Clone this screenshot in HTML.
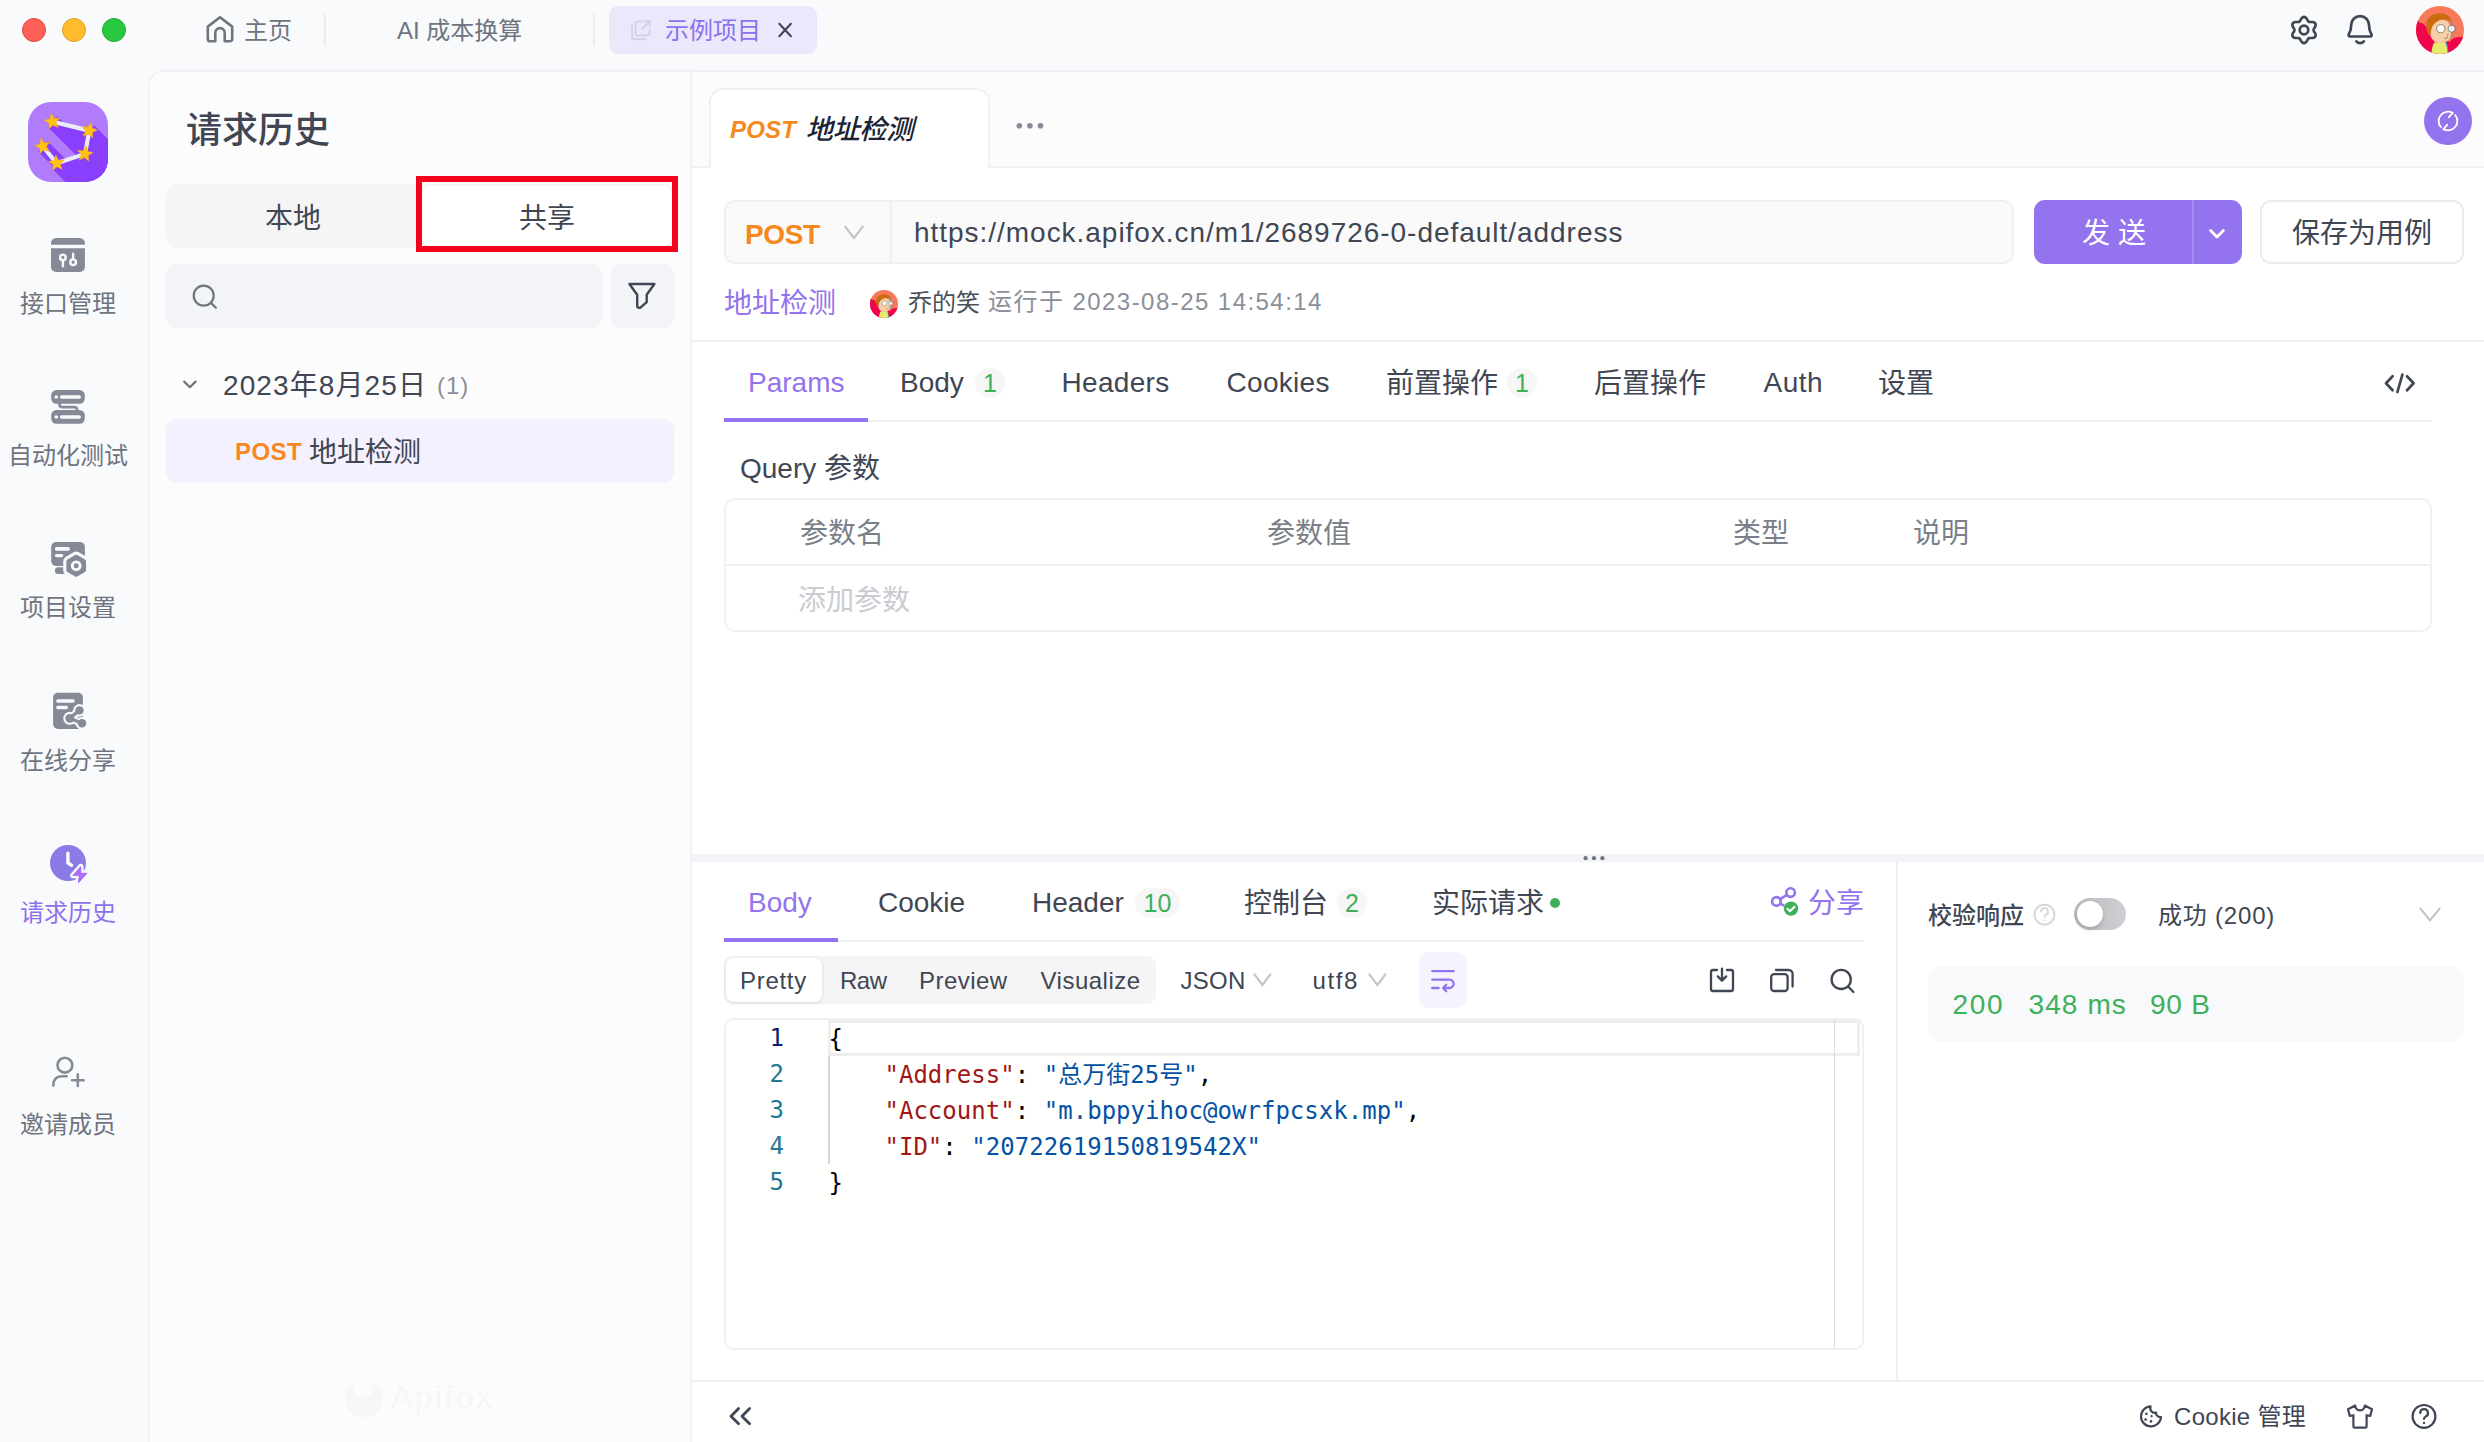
<!DOCTYPE html>
<html lang="zh-CN">
<head>
<meta charset="utf-8">
<title>Apifox - 请求历史</title>
<style>
*{box-sizing:border-box;margin:0;padding:0}
html,body{width:2484px;height:1442px;overflow:hidden;background:#f9fafb}
body{position:relative;font-family:"Liberation Sans","Noto Sans CJK SC",sans-serif;color:#404653;-webkit-font-smoothing:antialiased}
.a{position:absolute}
.t{position:absolute;white-space:nowrap;line-height:1;transform:translateY(-50%)}
.c{position:absolute;white-space:nowrap;line-height:1;transform:translate(-50%,-50%)}
svg{position:absolute;overflow:visible}
.mono{font-family:"DejaVu Sans Mono","Liberation Mono","Noto Sans CJK SC",monospace}
/* ---------- chrome ---------- */
#titlebar{left:0;top:0;width:2484px;height:70px;background:#f9fafb}
#sidebar{left:0;top:70px;width:150px;height:1372px;background:#f9fafb}
#panel{left:148px;top:70px;width:544px;height:1380px;background:#fcfcfd;border:2px solid #f0f2f6;border-radius:15px 0 0 0}
#main{left:692px;top:70px;width:1792px;height:1372px;background:#fff}
#tabstrip{left:692px;top:70px;width:1792px;height:98px;background:#fcfcfd;border-top:2px solid #f0f1f5;border-bottom:2px solid #f0f1f5}
#acttab{left:709px;top:88px;width:281px;height:80px;background:#fff;border:2px solid #f0f1f5;border-bottom:none;border-radius:14px 14px 0 0}

.tab{font-size:28px;color:#404653}
.tabact{font-size:28px;color:#9373ee}
.badge{position:absolute;height:30px;border-radius:15px;background:#f6f6f7;color:#3eb05a;font-size:25px;line-height:30px;text-align:center}
.th{font-size:28px;color:#7a7f8a}
.hl{position:absolute;background:#eef0f4}
.seg{font-size:24px;color:#404653;letter-spacing:.7px}
.ln{position:absolute;left:724px;width:60px;text-align:right;font-size:24px;line-height:36px;color:#237893}
.cl{position:absolute;left:826.5px;letter-spacing:.03px;margin-top:.5px;font-size:24px;line-height:36px;white-space:pre;color:#000}
.k{color:#a31515}.v{color:#0451a5}

.nav{color:#6e7480;font-size:24px}
.navact{color:#8d71ee;font-size:24px}
</style>
</head>
<body>
<!-- ======== window chrome ======== -->
<div class="a" id="titlebar"></div>
<div class="a" id="sidebar"></div>
<div class="a" id="panel"></div>
<div class="a" id="main"></div>
<div class="a" id="tabstrip"></div>
<div class="a" id="acttab"></div>

<!-- TITLEBAR -->
<div class="a" style="left:22px;top:18px;width:24px;height:24px;border-radius:50%;background:#fe5f57;border:1px solid #e2463f"></div>
<div class="a" style="left:62px;top:18px;width:24px;height:24px;border-radius:50%;background:#febc2e;border:1px solid #e0a123"></div>
<div class="a" style="left:102px;top:18px;width:24px;height:24px;border-radius:50%;background:#28c840;border:1px solid #1fab2f"></div>
<svg style="left:200px;top:10px" width="40" height="40" viewBox="200 10 40 40" fill="none" stroke="#6e7480" stroke-width="2.6" stroke-linejoin="round" stroke-linecap="round"><path d="M215.3 41.3H210.2a2.4 2.4 0 0 1-2.4-2.4V26.6L220 17.2l12.2 9.4v12.3a2.4 2.4 0 0 1-2.4 2.4h-5.1V32.8a4.7 4.7 0 0 0-9.4 0z"/></svg>
<div class="t nav" id="t_home" style="left:244px;top:31px">主页</div>
<div class="a" style="left:324px;top:14px;width:2px;height:32px;background:#e9ebef"></div>
<div class="t nav" id="t_ai" style="left:397px;top:31px">AI 成本换算</div>
<div class="a" style="left:593px;top:14px;width:2px;height:32px;background:#e9ebef"></div>
<div class="a" style="left:609px;top:6px;width:208px;height:48px;border-radius:9px;background:#ebe8fb"></div>
<svg style="left:628px;top:17px" width="26" height="26" viewBox="628 17 26 26" fill="none" stroke="#d4d1e2" stroke-width="2" stroke-linecap="round" stroke-linejoin="round"><path d="M641 21.5h-3.6a1.8 1.8 0 0 0-1.8 1.8v10.4a1.8 1.8 0 0 0 1.8 1.8h10.4a1.8 1.8 0 0 0 1.8-1.8V30"/><path d="M644.5 21.2h5.3v5.3M649.5 21.5l-7 7"/><path d="M632 25.5v11.8a2 2 0 0 0 2 2h11.8"/></svg>
<div class="t navact" id="t_proj" style="left:665px;top:31px">示例项目</div>
<svg style="left:775px;top:20px" width="20" height="20" viewBox="775 20 20 20" fill="none" stroke="#404653" stroke-width="2.1" stroke-linecap="round"><path d="M779.3 23.8l11.6 12.4M790.9 23.8l-11.6 12.4"/></svg>
<!-- gear -->
<svg style="left:2286px;top:12px" width="36" height="36" viewBox="-18 -18 36 36" fill="none" stroke="#404653" stroke-width="2.7" stroke-linejoin="round"><path d="M9.55 0.00 L9.62 0.50 L9.83 1.03 L10.14 1.61 L10.52 2.24 L10.91 2.92 L11.26 3.66 L11.51 4.42 L11.62 5.17 L11.55 5.89 L11.30 6.52 L10.87 7.06 L10.29 7.47 L9.58 7.76 L8.80 7.92 L7.99 7.99 L7.20 8.00 L6.46 7.98 L5.81 8.00 L5.25 8.08 L4.78 8.27 L4.37 8.59 L4.02 9.03 L3.68 9.59 L3.32 10.23 L2.92 10.91 L2.46 11.58 L1.93 12.18 L1.33 12.65 L0.68 12.95 L0.00 13.05 L-0.68 12.95 L-1.33 12.65 L-1.93 12.18 L-2.46 11.58 L-2.92 10.91 L-3.32 10.23 L-3.68 9.59 L-4.02 9.03 L-4.37 8.59 L-4.77 8.27 L-5.25 8.08 L-5.81 8.00 L-6.46 7.98 L-7.20 8.00 L-7.99 7.99 L-8.80 7.92 L-9.58 7.76 L-10.29 7.47 L-10.87 7.06 L-11.30 6.52 L-11.55 5.89 L-11.62 5.17 L-11.51 4.42 L-11.26 3.66 L-10.91 2.92 L-10.52 2.24 L-10.14 1.61 L-9.83 1.03 L-9.62 0.50 L-9.55 0.00 L-9.62 -0.50 L-9.83 -1.03 L-10.14 -1.61 L-10.52 -2.24 L-10.91 -2.92 L-11.26 -3.66 L-11.51 -4.42 L-11.62 -5.17 L-11.55 -5.89 L-11.30 -6.52 L-10.87 -7.06 L-10.29 -7.47 L-9.58 -7.76 L-8.80 -7.92 L-7.99 -7.99 L-7.20 -8.00 L-6.46 -7.98 L-5.81 -8.00 L-5.25 -8.08 L-4.78 -8.27 L-4.37 -8.59 L-4.02 -9.03 L-3.68 -9.59 L-3.32 -10.23 L-2.92 -10.91 L-2.46 -11.58 L-1.93 -12.18 L-1.33 -12.65 L-0.68 -12.95 L-0.00 -13.05 L0.68 -12.95 L1.33 -12.65 L1.93 -12.18 L2.46 -11.58 L2.92 -10.91 L3.32 -10.23 L3.68 -9.59 L4.02 -9.03 L4.37 -8.59 L4.78 -8.27 L5.25 -8.08 L5.81 -8.00 L6.46 -7.98 L7.20 -8.00 L7.99 -7.99 L8.80 -7.92 L9.58 -7.76 L10.29 -7.47 L10.87 -7.06 L11.30 -6.52 L11.55 -5.89 L11.62 -5.17 L11.51 -4.42 L11.26 -3.66 L10.91 -2.92 L10.52 -2.24 L10.14 -1.61 L9.83 -1.03 L9.62 -0.50Z"/><circle cx="0" cy="0" r="4.3"/></svg>
<!-- bell -->
<svg style="left:2342px;top:12px" width="36" height="36" viewBox="2342 12 36 36" fill="none" stroke="#404653" stroke-width="2.7" stroke-linecap="round" stroke-linejoin="round"><path d="M2350 36.5h20.2c1.3 0 1.8-1.2 1.2-2.2-1.5-2.5-2.4-4.3-2.4-9.3a8.9 8.9 0 0 0-17.8 0c0 5-.9 6.8-2.4 9.3-.6 1 .1 2.2 1.2 2.2z"/><path d="M2356.4 41.4c1.1 1.3 2.3 1.8 3.7 1.8s2.6-.5 3.7-1.8"/></svg>
<!-- avatar -->
<svg style="left:2416px;top:6px" width="48" height="48" viewBox="0 0 48 48"><defs><clipPath id="av1"><circle cx="24" cy="24" r="24"/></clipPath></defs><g clip-path="url(#av1)"><rect width="48" height="48" fill="#f8795a"/><path d="M-1 15c2.5-1 4 .5 5 2 2.5-.5 4.5 1 5.5 3.5L20 30l14 6c1.5-3 4-4.5 7-4.8 2.5-.5 5 .2 7.5-1.2V49H-1z" fill="#f0044c"/><path d="M15.4 49c.2-6 1.2-10 2.8-12.6h11.2c1.6 3 2.4 7 2.4 12.6z" fill="#e6ed6e"/><path d="M30 36.4c1.2 3 1.9 7 2 12.6" stroke="#21b5e0" stroke-width="1" fill="none"/><rect x="14" y="13.6" width="21.5" height="23.8" rx="10.2" ry="11.2" fill="#f7d0a8"/><path d="M35.2 14.5c.8 5 .9 12 .1 17.5" stroke="#21b5e0" stroke-width="1.2" fill="none"/><path d="M13 29.6c-2.4-4-3.2-9-2.4-13.2C12 10.6 17 7.4 23.6 7.3c6.5-.1 11 3.2 12 8.2-4.5-2.4-9.5-2.6-13.6-.6-4.2 2.2-6.8 6.2-7 11.2-.1 1.2-.6 2.4-2 3.5z" fill="#c96d0f"/><circle cx="24.8" cy="22.7" r="4.1" fill="#fbfcfd" stroke="#4a3a2c" stroke-width=".55"/><circle cx="35.6" cy="22.7" r="3.5" fill="#e6f2fa" stroke="#4a3a2c" stroke-width=".5"/><path d="M28.2 31.6c.4 1.4 1.8 1.6 2.6.6.5-.7.8-1.5.9-2.4" stroke="#5b4330" stroke-width=".55" fill="none"/><path d="M30.8 28.2c.6.3 1.2.3 1.8 0" stroke="#5b4330" stroke-width=".5" fill="none"/></g></svg>
<!-- SIDEBAR -->
<svg style="left:28px;top:102px" width="80" height="80" viewBox="28 102 80 80"><defs><clipPath id="lg1"><rect x="28" y="102" width="80" height="80" rx="23"/></clipPath></defs><g clip-path="url(#lg1)"><rect x="28" y="102" width="80" height="80" fill="#b17cfb"/><g fill="#8a3ffc"><polygon points="52.4,121.6 89.3,130.6 179.3,220.6 142.4,211.6"/><polygon points="89.3,130.6 85.0,154.0 175.0,244.0 179.3,220.6"/><polygon points="85.0,154.0 56.6,163.2 146.6,253.2 175.0,244.0"/><polygon points="56.6,163.2 42.8,146.2 132.8,236.2 146.6,253.2"/><polygon points="47.4,126.6 57.4,116.6 147.4,206.6 137.4,216.6"/><polygon points="84.3,135.6 94.3,125.6 184.3,215.6 174.3,225.6"/><polygon points="80.0,159.0 90.0,149.0 180.0,239.0 170.0,249.0"/><polygon points="51.6,168.2 61.6,158.2 151.6,248.2 141.6,258.2"/><polygon points="37.8,151.2 47.8,141.2 137.8,231.2 127.8,241.2"/></g><g stroke="#e9ebf7" stroke-width="4.2" stroke-linecap="round" fill="none"><path d="M52.4 121.6L89.3 130.6L85 154L56.6 163.2L42.8 146.2"/></g><g fill="#ffc20e" stroke="#f7a51c" stroke-width=".6"><polygon points="51.3,113.5 54.1,118.4 59.8,118.0 55.9,122.2 58.1,127.5 52.9,125.2 48.6,128.8 49.2,123.2 44.3,120.2 49.9,119.0"/><polygon points="91.0,122.6 92.0,128.2 97.5,129.7 92.4,132.4 92.6,138.1 88.6,134.1 83.2,136.1 85.7,131.0 82.2,126.5 87.8,127.3"/><polygon points="40.8,138.2 44.1,142.9 49.8,141.9 46.4,146.5 49.1,151.5 43.7,149.7 39.7,153.8 39.7,148.1 34.6,145.6 40.0,143.9"/><polygon points="86.1,145.9 87.5,151.4 93.1,152.6 88.2,155.6 88.8,161.2 84.5,157.6 79.3,159.9 81.5,154.6 77.6,150.4 83.3,150.8"/><polygon points="55.7,155.0 58.4,160.1 64.1,159.9 60.1,163.9 62.1,169.3 57.0,166.8 52.5,170.3 53.3,164.7 48.6,161.5 54.2,160.5"/></g></g></svg>
<svg style="left:51px;top:238px" width="34" height="34" viewBox="0 0 34 34"><path d="M5.2 .1h23.5a5.2 5.2 0 0 1 5.2 5.2v1.4H0V5.3A5.2 5.2 0 0 1 5.2 .1z" fill="#858a96"/><path d="M0 10.3h33.9V29a5 5 0 0 1-5 5H5a5 5 0 0 1-5-5z" fill="#858a96"/><g fill="none" stroke="#f9fafb" stroke-width="2.4" stroke-linecap="round"><circle cx="11.9" cy="19.4" r="2.8"/><path d="M11.9 22.6v5.6"/><circle cx="22.1" cy="24.2" r="2.8"/><path d="M22.1 21v-5.2"/></g></svg>
<div class="c nav" id="s1" style="left:68px;top:304px">接口管理</div>
<svg style="left:51px;top:390px" width="34" height="34" viewBox="0 0 34 34"><rect x="0.2" y="0" width="33.6" height="13.8" rx="5.2" fill="#858a96"/><rect x="0.2" y="20" width="33.6" height="13.8" rx="5.2" fill="#858a96"/><path d="M8.6 13v1.6a2.6 2.6 0 0 0 2.6 2.6h12.2a2.6 2.6 0 0 1 2.6 2.6V21" fill="none" stroke="#858a96" stroke-width="2.7"/><g stroke="#f8f9fb" stroke-width="3.5" stroke-linecap="round"><path d="M10.6 6.9h17.6M10.6 26.9h17.6"/><path d="M5.2 6.9h.1M5.2 26.9h.1"/></g></svg>
<div class="c nav" id="s2" style="left:68px;top:456px">自动化测试</div>
<svg style="left:51px;top:542px" width="38" height="36" viewBox="0 0 38 36"><rect x=".2" y=".1" width="33.7" height="23.8" rx="4.8" fill="#858a96"/><rect x="4" y="25.2" width="12" height="6.7" rx="3" fill="#858a96"/><g stroke="#f8f9fb" stroke-linecap="round"><path d="M5.6 6.9h11.6" stroke-width="3.6"/><path d="M5.6 13.6h5" stroke-width="3.4"/></g><polygon points="25.20,14.90 32.91,19.35 32.91,28.25 25.20,32.70 17.49,28.25 17.49,19.35" fill="#f8f9fb" stroke="#f8f9fb" stroke-width="10.6" stroke-linejoin="round"/><polygon points="25.20,14.90 32.91,19.35 32.91,28.25 25.20,32.70 17.49,28.25 17.49,19.35" fill="#858a96" stroke="#858a96" stroke-width="4.2" stroke-linejoin="round"/><circle cx="25.2" cy="23.8" r="3.95" fill="none" stroke="#f8f9fb" stroke-width="2.9"/></svg>
<div class="c nav" id="s3" style="left:68px;top:608px">项目设置</div>
<svg style="left:53px;top:692px" width="36" height="38" viewBox="0 0 36 38"><rect x=".1" y=".7" width="29.8" height="36.2" rx="4.8" fill="#858a96"/><g stroke="#f8f9fb" stroke-width="3.5" stroke-linecap="round"><path d="M4.9 8.9h15.2M4.9 15.6h8.4"/></g><g stroke="#f8f9fb" stroke-width="7.6" stroke-linecap="round" stroke-linejoin="round" fill="none"><path d="M26.5 18.4L16.75 26.3L29 31.3"/></g><g fill="#f8f9fb"><circle cx="26.5" cy="18.4" r="6.3"/><circle cx="16.75" cy="26.3" r="6.5"/><circle cx="29" cy="31.3" r="6.3"/></g><g stroke="#858a96" stroke-width="3.3" fill="none" stroke-linejoin="round"><path d="M26.5 18.4L16.75 26.3L29 31.3"/></g><g fill="#858a96"><circle cx="26.5" cy="18.4" r="4.2"/><circle cx="16.75" cy="26.3" r="4.4"/><circle cx="29" cy="31.3" r="4.2"/></g></svg>
<div class="c nav" id="s4" style="left:68px;top:761px">在线分享</div>
<svg style="left:50px;top:845px" width="40" height="40" viewBox="0 0 40 40"><circle cx="18" cy="18" r="18" fill="#8b7be6"/><path d="M17.9 8.2v9.8l3.6 2.2" stroke="#fff" stroke-width="3.4" fill="none" stroke-linecap="round" stroke-linejoin="round"/><path d="M30.75 21.6L22.85 30.5H29.3L28.25 38L37 28.3H30.95z" fill="#ad6efc" stroke="#f8f9fb" stroke-width="5.6" stroke-linejoin="round" paint-order="stroke"/><path d="M30.75 21.6L22.85 30.5H29.3L28.25 38L37 28.3H30.95z" fill="#ad6efc" stroke="#ad6efc" stroke-width=".8" stroke-linejoin="round"/></svg>
<div class="c navact" id="s5" style="left:68px;top:913px">请求历史</div>
<svg style="left:50px;top:1054px" width="36" height="36" viewBox="50 1055 36 36" fill="none" stroke="#858a96" stroke-width="2.6" stroke-linecap="round"><circle cx="64.9" cy="1066.2" r="7.4"/><path d="M53.3 1086.4c0-6 3-9.2 8.6-9.2h4.8"/><path d="M72 1081.2h11.6M77.8 1075.4v11.6"/></svg>
<div class="c nav" id="s6" style="left:68px;top:1125px">邀请成员</div>
<!-- PANEL -->
<div class="t" id="p_title" style="left:186px;top:130.5px;font-size:36px;font-weight:500;color:#404653">请求历史</div>
<div class="a" style="left:166px;top:184px;width:508px;height:64px;border-radius:10px;background:#f5f5f5"></div>
<div class="a" style="left:422px;top:186px;width:250px;height:60px;border-radius:8px;background:#fff;box-shadow:0 1px 3px rgba(0,0,0,.08)"></div>
<div class="c" id="p_local" style="left:293px;top:218.5px;font-size:28px;color:#404653">本地</div>
<div class="c" id="p_share" style="left:547px;top:218.5px;font-size:28px;color:#404653">共享</div>
<div class="a" style="left:416px;top:176px;width:262px;height:76px;border:6px solid #f5001d"></div>
<div class="a" style="left:166px;top:264px;width:436px;height:64px;border-radius:11px;background:#f3f4f8"></div>
<svg style="left:188px;top:280px" width="32" height="32" viewBox="188 280 32 32" fill="none" stroke="#6e7480" stroke-width="2.2" stroke-linecap="round"><circle cx="203.7" cy="295.6" r="10"/><path d="M211.2 303.1l4.7 4.7"/></svg>
<div class="a" style="left:610px;top:264px;width:64px;height:64px;border-radius:11px;background:#f3f4f8"></div>
<svg style="left:624px;top:278px" width="36" height="36" viewBox="624 278 36 36" fill="none" stroke="#404653" stroke-width="2.4" stroke-linejoin="round"><path d="M629.4 284h25l-7.7 10.8v7.4l-6 5.2c-1.5.9-3.5.3-3.5-1.2v-11.4z" transform="translate(0 0)"/></svg>
<svg style="left:180px;top:374px" width="20" height="20" viewBox="180 374 20 20" fill="none" stroke="#6e7480" stroke-width="2.2" stroke-linecap="round" stroke-linejoin="round"><path d="M184.2 381.6l5.7 5.7 5.7-5.7"/></svg>
<div class="t" id="p_date" style="left:223px;top:385.7px;font-size:28px;color:#404653;letter-spacing:1.1px">2023年8月25日</div>
<div class="t" id="p_cnt" style="left:437px;top:386px;font-size:24px;color:#8a8f99;letter-spacing:1px">(1)</div>
<div class="a" style="left:166px;top:419px;width:508px;height:64px;border-radius:11px;background:#f3f1fd"></div>
<div class="t" id="p_post" style="left:235px;top:452px;font-size:24px;font-weight:700;color:#f6881d;letter-spacing:.4px">POST</div>
<div class="t" id="p_name" style="left:309px;top:453px;font-size:28px;color:#404653">地址检测</div>
<!-- watermark -->
<svg style="left:344px;top:1379px" width="40" height="40" viewBox="344 1379 40 40"><defs><mask id="wm1"><rect x="340" y="1375" width="50" height="50" fill="#fff"/><circle cx="363" cy="1387.6" r="10.2" fill="#000"/></mask></defs><circle cx="364" cy="1398.4" r="19" fill="#f6f7f8" mask="url(#wm1)"/></svg>
<div class="t" id="p_wm" style="left:391px;top:1397px;font-size:32px;color:#f5f6f7;letter-spacing:2.4px">Apifox</div>
<!-- REQUEST -->
<div class="t" id="r_tpost" style="left:730px;top:130px;font-size:24px;font-weight:700;font-style:italic;color:#f6881d;letter-spacing:.2px">POST</div>
<div class="t" id="r_tname" style="left:805.5px;top:130px;font-size:27.4px;font-style:italic;color:#1a2233;font-weight:500;letter-spacing:-.5px">地址检测</div>
<svg style="left:1012px;top:118px" width="36" height="16" viewBox="1012 118 36 16" fill="#858a96"><circle cx="1019.3" cy="125.8" r="2.8"/><circle cx="1029.9" cy="125.8" r="2.8"/><circle cx="1040.5" cy="125.8" r="2.8"/></svg>
<div class="a" style="left:2424px;top:97px;width:48px;height:48px;border-radius:50%;background:#9373ee"></div>
<svg style="left:2434px;top:107px" width="28" height="28" viewBox="-15.6 -15.6 31.2 31.2" fill="none" stroke="#fff" stroke-width="2.1" stroke-linecap="round" stroke-linejoin="round"><path d="M-7.97 6.68A10.4 10.4 0 0 1 5.20 -9.01L0.9 -4.3"/><path d="M7.97 -6.68A10.4 10.4 0 0 1 -5.20 9.01L-0.9 4.3"/></svg>
<!-- url bar -->
<div class="a" style="left:724px;top:200px;width:1290px;height:64px;border-radius:11px;background:#fafafa;border:2px solid #eff0f4"></div>
<div class="a" style="left:890px;top:202px;width:2px;height:60px;background:#eff0f4"></div>
<div class="t" id="r_post" style="left:745px;top:235px;font-size:28px;font-weight:700;color:#f6881d;letter-spacing:-.4px">POST</div>
<svg style="left:842px;top:222px" width="24" height="20" viewBox="842 222 24 20" fill="none" stroke="#c3c5cb" stroke-width="2.2" stroke-linecap="round" stroke-linejoin="round"><path d="M845.2 226.6l8.8 11.4 8.8-11.4"/></svg>
<div class="t" id="r_url" style="left:914px;top:233px;font-size:28px;color:#404653;letter-spacing:.97px">https://mock.apifox.cn/m1/2689726-0-default/address</div>
<div class="a" style="left:2034px;top:200px;width:208px;height:64px;border-radius:11px;background:#9373ee"></div>
<div class="a" style="left:2192px;top:200px;width:2px;height:64px;background:#a78df1"></div>
<div class="c" id="r_send" style="left:2114px;top:234px;font-size:28px;color:#fff">发 送</div>
<svg style="left:2205px;top:224px" width="24" height="20" viewBox="2205 224 24 20" fill="none" stroke="#fff" stroke-width="2.8" stroke-linecap="round" stroke-linejoin="round"><path d="M2210.6 230.6l6.4 6.4 6.4-6.4"/></svg>
<div class="a" style="left:2260px;top:200px;width:204px;height:64px;border-radius:11px;background:#fff;border:2px solid #e9ebf0"></div>
<div class="c" id="r_save" style="left:2362px;top:234px;font-size:28px;color:#404653">保存为用例</div>
<!-- meta row -->
<div class="t" id="r_name" style="left:724px;top:304.3px;font-size:28px;color:#9373ee">地址检测</div>
<svg style="left:870px;top:290px" width="28" height="28" viewBox="0 0 48 48"><defs><clipPath id="av2"><circle cx="24" cy="24" r="24"/></clipPath></defs><g clip-path="url(#av2)"><rect width="48" height="48" fill="#f8795a"/><path d="M-1 15c2.5-1 4 .5 5 2 2.5-.5 4.5 1 5.5 3.5L20 30l14 6c1.5-3 4-4.5 7-4.8 2.5-.5 5 .2 7.5-1.2V49H-1z" fill="#f0044c"/><path d="M15.4 49c.2-6 1.2-10 2.8-12.6h11.2c1.6 3 2.4 7 2.4 12.6z" fill="#e6ed6e"/><path d="M30 36.4c1.2 3 1.9 7 2 12.6" stroke="#21b5e0" stroke-width="1" fill="none"/><rect x="14" y="13.6" width="21.5" height="23.8" rx="10.2" ry="11.2" fill="#f7d0a8"/><path d="M35.2 14.5c.8 5 .9 12 .1 17.5" stroke="#21b5e0" stroke-width="1.2" fill="none"/><path d="M13 29.6c-2.4-4-3.2-9-2.4-13.2C12 10.6 17 7.4 23.6 7.3c6.5-.1 11 3.2 12 8.2-4.5-2.4-9.5-2.6-13.6-.6-4.2 2.2-6.8 6.2-7 11.2-.1 1.2-.6 2.4-2 3.5z" fill="#c96d0f"/><circle cx="24.8" cy="22.7" r="4.1" fill="#fbfcfd" stroke="#4a3a2c" stroke-width=".55"/><circle cx="35.6" cy="22.7" r="3.5" fill="#e6f2fa" stroke="#4a3a2c" stroke-width=".5"/><path d="M28.2 31.6c.4 1.4 1.8 1.6 2.6.6.5-.7.8-1.5.9-2.4" stroke="#5b4330" stroke-width=".55" fill="none"/><path d="M30.8 28.2c.6.3 1.2.3 1.8 0" stroke="#5b4330" stroke-width=".5" fill="none"/></g></svg>
<div class="t" id="r_user" style="left:908px;top:303px;font-size:24px;color:#4a4f5a">乔的笑</div>
<div class="t" id="r_time" style="left:988px;top:302.2px;font-size:24px;color:#8a8f99;letter-spacing:1.45px">运行于 2023-08-25 14:54:14</div>
<div class="hl" style="left:692px;top:340px;width:1792px;height:2px"></div>
<!-- request tabs -->
<div class="t tabact" id="q_params" style="left:748px;top:383px">Params</div>
<div class="a" style="left:724px;top:418px;width:144px;height:4px;background:#9373ee;z-index:2"></div>
<div class="t tab" id="q_body" style="left:900px;top:383px">Body</div>
<div class="badge" style="left:975px;top:368px;width:30px">1</div>
<div class="t tab" id="q_headers" style="left:1061.5px;top:383px;letter-spacing:.3px">Headers</div>
<div class="t tab" id="q_cookies" style="left:1226.5px;top:383px;letter-spacing:.3px">Cookies</div>
<div class="t tab" id="q_pre" style="left:1386px;top:384px">前置操作</div>
<div class="badge" style="left:1507px;top:368px;width:30px">1</div>
<div class="t tab" id="q_post" style="left:1594px;top:384px">后置操作</div>
<div class="t tab" id="q_auth" style="left:1763.5px;top:383px;letter-spacing:.5px">Auth</div>
<div class="t tab" id="q_set" style="left:1878px;top:384px">设置</div>
<svg style="left:2382px;top:370px" width="36" height="26" viewBox="2382 370 36 26" fill="none" stroke="#404653" stroke-width="2.7" stroke-linecap="round" stroke-linejoin="round"><path d="M2392.6 376.3l-6.6 7 6.6 7M2407 376.3l6.6 7-6.6 7M2402.4 374.6l-5 17.4"/></svg>
<div class="hl" style="left:724px;top:420px;width:1708px;height:2px"></div>
<div class="t" id="q_query" style="left:740px;top:469px;font-size:28px;color:#404653">Query 参数</div>
<div class="a" style="left:724px;top:498px;width:1708px;height:134px;border:2px solid #f0f2f5;border-radius:11px;background:#fff"></div>
<div class="hl" style="left:726px;top:564px;width:1704px;height:2px"></div>
<div class="t th" id="q_c1" style="left:800px;top:534.2px">参数名</div>
<div class="t th" id="q_c2" style="left:1267px;top:534.2px">参数值</div>
<div class="t th" id="q_c3" style="left:1733px;top:534.2px">类型</div>
<div class="t th" id="q_c4" style="left:1913px;top:534.2px">说明</div>
<div class="t" id="q_add" style="left:798px;top:601.2px;font-size:28px;color:#c9cbd0">添加参数</div>
<!-- splitter -->
<div class="a" style="left:692px;top:854px;width:1792px;height:8px;background:#f3f4f8"></div>
<svg style="left:1580px;top:852px" width="28" height="12" viewBox="1580 852 28 12" fill="#6e7480"><circle cx="1585.6" cy="858.2" r="2.1"/><circle cx="1594" cy="858.2" r="2.1"/><circle cx="1602.4" cy="858.2" r="2.1"/></svg>
<!-- RESPONSE -->
<div class="t tabact" id="e_body" style="left:748px;top:903px">Body</div>
<div class="a" style="left:724px;top:938px;width:114px;height:4px;background:#9373ee;z-index:2"></div>
<div class="t tab" id="e_cookie" style="left:878px;top:903px">Cookie</div>
<div class="t tab" id="e_header" style="left:1032px;top:903px">Header</div>
<div class="badge" style="left:1135px;top:888px;width:45px">10</div>
<div class="t tab" id="e_console" style="left:1244px;top:904px">控制台</div>
<div class="badge" style="left:1337px;top:888px;width:30px">2</div>
<div class="t tab" id="e_actual" style="left:1432px;top:904px">实际请求</div>
<div class="a" style="left:1550px;top:898px;width:10px;height:10px;border-radius:50%;background:#3eb05a"></div>
<svg style="left:1768px;top:884px" width="34" height="36" viewBox="1768 884 34 36"><g fill="none" stroke="#9373ee" stroke-width="2.6"><circle cx="1790.6" cy="892.6" r="4.3"/><circle cx="1776.4" cy="901.4" r="4.3"/><path d="M1786.9 894.9l-6.8 4.2M1780.2 903.5l4 2.4"/></g><circle cx="1791" cy="908.6" r="7.2" fill="#3eb05a"/><path d="M1787.4 908.8l2.6 2.5 4.5-4.6" fill="none" stroke="#fff" stroke-width="2" stroke-linecap="round" stroke-linejoin="round"/></svg>
<div class="t" id="e_share" style="left:1808px;top:904px;font-size:28px;color:#9373ee">分享</div>
<div class="hl" style="left:724px;top:940px;width:1140px;height:2px"></div>
<!-- toolbar -->
<div class="a" style="left:724px;top:956px;width:432px;height:48px;border-radius:9px;background:#f5f5f5"></div>
<div class="a" style="left:726px;top:958px;width:96px;height:44px;border-radius:7px;background:#fff;box-shadow:0 1px 4px rgba(0,0,0,.12)"></div>
<div class="t seg" id="e_pretty" style="left:740px;top:981px">Pretty</div>
<div class="t seg" id="e_raw" style="left:840px;top:981px;letter-spacing:-.5px">Raw</div>
<div class="t seg" id="e_preview" style="left:919px;top:981px;letter-spacing:.45px">Preview</div>
<div class="t seg" id="e_visual" style="left:1040.5px;top:981px;letter-spacing:.5px">Visualize</div>
<div class="t seg" id="e_json" style="left:1180.5px;top:981px;letter-spacing:.3px">JSON</div>
<svg style="left:1250px;top:970px" width="24" height="20" viewBox="1250 970 24 20" fill="none" stroke="#c3c5cb" stroke-width="2.2" stroke-linecap="round" stroke-linejoin="round"><path d="M1254.4 974.4l8 10.6 8-10.6"/></svg>
<div class="t seg" id="e_utf8" style="left:1312.5px;top:981px;letter-spacing:1.6px">utf8</div>
<svg style="left:1365px;top:970px" width="24" height="20" viewBox="1365 970 24 20" fill="none" stroke="#c3c5cb" stroke-width="2.2" stroke-linecap="round" stroke-linejoin="round"><path d="M1369.4 974.4l8 10.6 8-10.6"/></svg>
<div class="a" style="left:1419px;top:952px;width:48px;height:56px;border-radius:10px;background:#f5f3fe"></div>
<svg style="left:1429px;top:966px" width="28" height="28" viewBox="1429 966 28 28" fill="none" stroke="#9373ee" stroke-width="2.3" stroke-linecap="round" stroke-linejoin="round"><path d="M1432.2 971.2h21.4M1432.2 988h6.5M1432.2 979.6h17.2a4.2 4.2 0 0 1 0 8.4h-6.2M1446.2 984.8l-3.2 3.2 3.2 3.2"/></svg>
<svg style="left:1706px;top:965px" width="32" height="32" viewBox="1706 964 32 32" fill="none" stroke="#404653" stroke-width="2.3" stroke-linecap="round" stroke-linejoin="round"><path d="M1717 969h-4a2 2 0 0 0-2 2v17a2 2 0 0 0 2 2h18a2 2 0 0 0 2-2v-17a2 2 0 0 0-2-2h-4"/><path d="M1722 967.6v11.4M1717.8 975.4l4.2 4.2 4.2-4.2"/></svg>
<svg style="left:1766px;top:965px" width="32" height="32" viewBox="1766 964 32 32" fill="none" stroke="#404653" stroke-width="2.3" stroke-linecap="round" stroke-linejoin="round"><rect x="1771.2" y="973.2" width="16.4" height="16.8" rx="3"/><path d="M1776 969h12.6a4 4 0 0 1 4 4v12.6"/></svg>
<svg style="left:1826px;top:965px" width="32" height="32" viewBox="1826 964 32 32" fill="none" stroke="#404653" stroke-width="2.3" stroke-linecap="round"><circle cx="1841.2" cy="978.4" r="9.6"/><path d="M1848.4 985.8l5 5.2"/></svg>
<!-- editor -->
<div class="a" style="left:724px;top:1018px;width:1140px;height:332px;border:2px solid #eff0f4;border-radius:9px;background:#fffffe"></div>
<div class="a" style="left:828px;top:1020px;width:1032px;height:36px;border:3.5px solid #eeeeee;background:#fffffe"></div>
<div class="a" style="left:1834px;top:1020px;width:1px;height:328px;background:#dcdcdc"></div>
<div class="a" style="left:828px;top:1056px;width:2px;height:108px;background:#d6d6d6"></div>
<div class="ln mono" style="top:1020px;color:#0b216f">1</div>
<div class="ln mono" style="top:1056px">2</div>
<div class="ln mono" style="top:1092px">3</div>
<div class="ln mono" style="top:1128px">4</div>
<div class="ln mono" style="top:1164px">5</div>
<div class="cl mono" id="c1" style="top:1020px;margin-left:2px">{</div>
<div class="cl mono" id="c2" style="top:1056px">    <span class="k">"Address"</span>: <span class="v">"总万街25号"</span>,</div>
<div class="cl mono" id="c3" style="top:1092px">    <span class="k">"Account"</span>: <span class="v">"m.bppyihoc@owrfpcsxk.mp"</span>,</div>
<div class="cl mono" id="c4" style="top:1128px">    <span class="k">"ID"</span>: <span class="v">"20722619150819542X"</span></div>
<div class="cl mono" id="c5" style="top:1164px;margin-left:2px">}</div>
<!-- validation panel -->
<div class="hl" style="left:1896px;top:862px;width:2px;height:518px"></div>
<div class="t" id="v_title" style="left:1928px;top:916px;font-size:24px;font-weight:500;color:#404653">校验响应</div>
<svg style="left:2032px;top:902px" width="26" height="26" viewBox="2032 902 26 26" fill="none" stroke="#d3d5da" stroke-width="1.8" stroke-linecap="round"><circle cx="2044.4" cy="914.6" r="10"/><path d="M2041 911.6a3.5 3.5 0 1 1 4.8 3.2c-1 .5-1.4 1.1-1.4 2.2"/><circle cx="2044.4" cy="920.4" r=".9" fill="#d3d5da" stroke="none"/></svg>
<div class="a" style="left:2074px;top:898px;width:52px;height:32px;border-radius:16px;background:linear-gradient(90deg,#b9babd,#cfd0d3)"></div>
<div class="a" style="left:2077px;top:901px;width:26px;height:26px;border-radius:50%;background:#fff;box-shadow:0 2px 4px rgba(0,35,11,.2)"></div>
<div class="t" id="v_ok" style="left:2158px;top:916px;font-size:24px;color:#404653;letter-spacing:.8px">成功 (200)</div>
<svg style="left:2416px;top:904px" width="28" height="22" viewBox="2416 904 28 22" fill="none" stroke="#c3c5cb" stroke-width="2.2" stroke-linecap="round" stroke-linejoin="round"><path d="M2420.4 908.6l9.6 11.8 9.6-11.8"/></svg>
<div class="a" style="left:1928px;top:966px;width:536px;height:76px;border-radius:14px;background:#f8f9fb"></div>
<div class="t" id="v_200" style="left:1952.5px;top:1005px;font-size:28px;color:#3eb05a;letter-spacing:1.7px">200</div>
<div class="t" id="v_ms" style="left:2028.5px;top:1005px;font-size:28px;color:#3eb05a;letter-spacing:1.1px">348 ms</div>
<div class="t" id="v_b" style="left:2150px;top:1005px;font-size:28px;color:#3eb05a;letter-spacing:.8px">90 B</div>
<!-- FOOTER -->
<div class="hl" style="left:692px;top:1380px;width:1792px;height:2px"></div>
<svg style="left:724px;top:1402px" width="32" height="28" viewBox="724 1402 32 28" fill="none" stroke="#404653" stroke-width="2.8" stroke-linecap="round" stroke-linejoin="round"><path d="M738.6 1408.6l-7.6 7.6 7.6 7.6M749.6 1408.6l-7.6 7.6 7.6 7.6"/></svg>
<svg style="left:2136px;top:1402px" width="30" height="30" viewBox="2136 1402 30 30" fill="none" stroke="#404653" stroke-width="2.2" stroke-linecap="round" stroke-linejoin="round"><path d="M2150.6 1406.4a10 10 0 1 0 10.4 10.6 4.2 4.2 0 0 1-5-4.4 4.6 4.6 0 0 1-5.4-6.2z"/><g fill="#404653" stroke="none"><circle cx="2146.4" cy="1413.8" r="1.3"/><circle cx="2145.6" cy="1419.6" r="1.3"/><circle cx="2151" cy="1421.4" r="1.3"/><circle cx="2151.6" cy="1416.2" r="1.1"/></g></svg>
<div class="t" id="f_cookie" style="left:2174px;top:1417px;font-size:24px;color:#404653;letter-spacing:.3px">Cookie 管理</div>
<svg style="left:2344px;top:1402px" width="32" height="30" viewBox="2344 1402 32 30" fill="none" stroke="#404653" stroke-width="2.2" stroke-linecap="round" stroke-linejoin="round"><path d="M2355.2 1405.6l-7.2 3.6 1.8 6.8 3.6-.8v11.2a1.2 1.2 0 0 0 1.2 1.2h10.8a1.2 1.2 0 0 0 1.2-1.2v-11.2l3.6.8 1.8-6.8-7.2-3.6a4.8 4.8 0 0 1-9.6 0z"/></svg>
<svg style="left:2408px;top:1402px" width="32" height="30" viewBox="2408 1402 32 30" fill="none" stroke="#404653" stroke-width="2.2" stroke-linecap="round"><circle cx="2424" cy="1416.4" r="11.4"/><path d="M2420.2 1413a3.9 3.9 0 1 1 5.4 3.6c-1.1.6-1.6 1.2-1.6 2.4"/><circle cx="2424" cy="1423" r="1.2" fill="#404653" stroke="none"/></svg>
</body>
</html>
